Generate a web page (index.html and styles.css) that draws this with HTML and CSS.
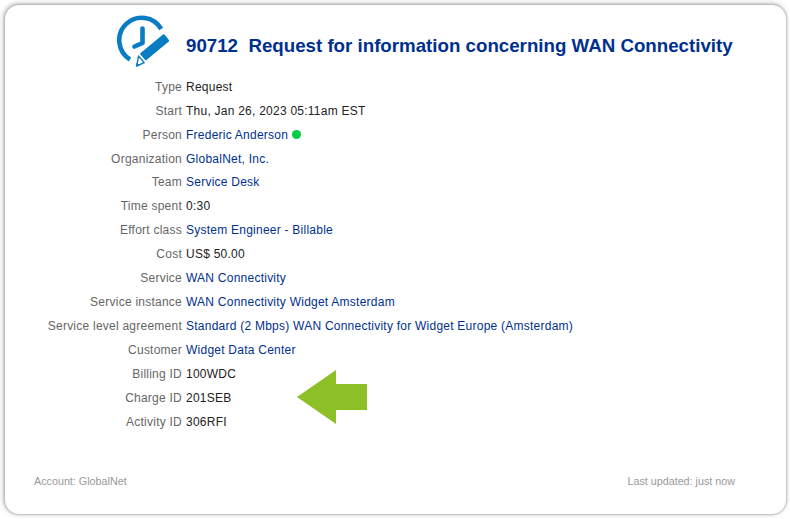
FILE: index.html
```html
<!DOCTYPE html>
<html lang="en">
<head>
<meta charset="utf-8">
<title>90712 Request</title>
<link rel="stylesheet" href="styles.css">
</head>
<body>
<main class="card">
  <header class="head">
    <svg class="logo" viewBox="0 0 52 55" width="52" height="55" aria-hidden="true">
      <path class="ring" d="M13 46.5 A22.5 22.5 0 1 1 44.2 16"/>
      <path class="hands" d="M25.5 15.5 V30 L17.5 33.5"/>
      <path class="pencil" d="M46 21.5 Q47 20.7 47.8 21.7 L51.9 27 Q52.5 28 51.5 28.8 L29.5 47 Q28.8 47.5 28 46.8 L23.4 41.5 Q22.8 40.7 23.6 40 Z"/>
      <path class="tip" d="M21.5 43 L27.2 49.6 L19.8 53 Z"/>
      <path class="point" d="M19.4 49.8 L22.8 52 L18.8 53.8 Z"/>
    </svg>
    <h1 class="title">90712&nbsp; Request for information concerning WAN Connectivity</h1>
  </header>
  <dl class="fields">
    <div class="row"><dt>Type</dt><dd>Request</dd></div>
    <div class="row"><dt>Start</dt><dd>Thu, Jan 26, 2023 05:11am EST</dd></div>
    <div class="row"><dt>Person</dt><dd class="link">Frederic Anderson <span class="dot"></span></dd></div>
    <div class="row"><dt>Organization</dt><dd class="link">GlobalNet, Inc.</dd></div>
    <div class="row"><dt>Team</dt><dd class="link">Service Desk</dd></div>
    <div class="row"><dt>Time spent</dt><dd>0:30</dd></div>
    <div class="row"><dt>Effort class</dt><dd class="link">System Engineer - Billable</dd></div>
    <div class="row"><dt>Cost</dt><dd>US$ 50.00</dd></div>
    <div class="row"><dt>Service</dt><dd class="link">WAN Connectivity</dd></div>
    <div class="row"><dt>Service instance</dt><dd class="link">WAN Connectivity Widget Amsterdam</dd></div>
    <div class="row"><dt>Service level agreement</dt><dd class="link">Standard (2 Mbps) WAN Connectivity for Widget Europe (Amsterdam)</dd></div>
    <div class="row"><dt>Customer</dt><dd class="link">Widget Data Center</dd></div>
    <div class="row"><dt>Billing ID</dt><dd>100WDC</dd></div>
    <div class="row"><dt>Charge ID</dt><dd>201SEB</dd></div>
    <div class="row"><dt>Activity ID</dt><dd>306RFI</dd></div>
  </dl>
  <svg class="arrow" viewBox="0 0 70 54" width="70" height="54" aria-hidden="true">
    <path d="M0 27 L39 0 V14 H70 V40 H39 V54 Z"/>
  </svg>
  <footer class="foot">
    <span>Account: GlobalNet</span>
    <span>Last updated: just now</span>
  </footer>
</main>
</body>
</html>
```
FILE: styles.css
```css
* { box-sizing: border-box; }
html, body { margin: 0; height: 100%; background: #fff; }
body { padding: 5px 4px 5px 5px; font-family: "Liberation Sans", Arial, sans-serif; }
.card {
  position: relative;
  height: 509px;
  background: #fff;
  border-radius: 14px;
  box-shadow: -1px -1px 5px 1px rgba(0,0,0,.2), 0 0 3px rgba(0,0,0,.4);
  display: flex;
  flex-direction: column;
}
.head { display: flex; align-items: flex-start; height: 57px; padding: 8px 0 0 112px; }
.logo { flex: none; }
.ring { fill: none; stroke: #0a7cc4; stroke-width: 4.6; }
.hands { fill: none; stroke: #0a7cc4; stroke-width: 4.6; stroke-linecap: round; stroke-linejoin: round; }
.pencil, .point { fill: #0a7cc4; }
.tip { fill: #fff; stroke: #0a7cc4; stroke-width: 1.4; stroke-linejoin: round; }
.title { margin: 21px 0 0 17px; font-size: 18.72px; line-height: 24px; font-weight: 700; color: #00308f; white-space: nowrap; }
.fields { margin: 13.81px 0 0; display: flex; flex-direction: column; font-size: 12px; letter-spacing: .24px; }
.row { display: grid; grid-template-columns: 177px 1fr; column-gap: 4px; height: 23.93px; line-height: 23.93px; }
dt { text-align: right; color: #666; }
dd { margin: 0; color: #222; }
.link { color: #00308f; }
.dot { display: inline-block; width: 9px; height: 9px; border-radius: 50%; background: #00cc44; }
.arrow { position: absolute; left: 292px; top: 365px; fill: #8cc026; }
.foot {
  margin-top: auto; display: flex; justify-content: space-between;
  padding: 0 51px 27px 29px;
  font-size: 10.75px; line-height: 12px; color: #999;
}
```
